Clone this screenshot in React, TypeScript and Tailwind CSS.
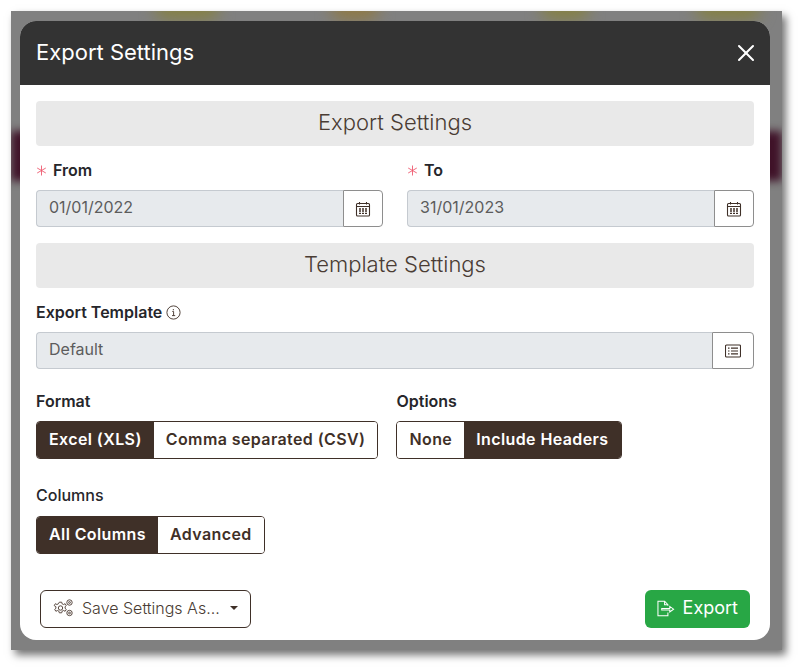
import { X } from "lucide-react";

const font = { fontFamily: "Inter, 'Liberation Sans', sans-serif" };

function CalendarIcon() {
  return (
    <svg width="16" height="16" viewBox="0 0 16 16" fill="none" stroke="#3f3028" strokeWidth="1.1">
      <rect x="1.5" y="2.5" width="13" height="12.5" rx="1" />
      <path d="M1.5 5.5h13M4.5 1v2.5M11.5 1v2.5" />
      <path d="M4 8h2M7 8h2M10 8h2M4 10h2M7 10h2M10 10h2M4 12.3h2M7 12.3h2M10 12.3h2" strokeWidth="1.3" />
    </svg>
  );
}

function ListIcon() {
  return (
    <svg width="16" height="14" viewBox="0 0 16 14" fill="none" stroke="#3f3028" strokeWidth="1.1">
      <rect x="0.5" y="1" width="15" height="12" rx="1" />
      <path d="M3 4.2h1.5M3 7h1.5M3 9.8h1.5M6 4.2h7M6 7h7M6 9.8h7" strokeWidth="1.2" />
    </svg>
  );
}

function InfoIcon() {
  return (
    <svg width="15" height="15" viewBox="0 0 15 15" fill="none" stroke="#3f3028" strokeWidth="0.9">
      <circle cx="7.5" cy="7.5" r="6.6" />
      <path d="M6.3 6.5h1.3v4M6 10.6h3.2" />
      <path d="M7.4 4.2v1" strokeWidth="1.2" />
    </svg>
  );
}

function Asterisk() {
  return (
    <svg width="11" height="11" viewBox="0 0 11 11" fill="none" stroke="#ee5a6f" strokeWidth="0.9">
      <path d="M5.5 0.5v10M1.2 3l8.6 5M1.2 8l8.6-5" />
    </svg>
  );
}

function GearsIcon() {
  return (
    <svg width="21" height="18" viewBox="0 0 21 18" fill="none" stroke="#5a4a42" strokeWidth="1">
      <circle cx="7.5" cy="9" r="2.2" />
      <path d="M6.3 3.2h2.4l.4 1.6 1.5.7 1.5-.8 1.2 1.9-1.2 1.1v1.6l1.2 1.1-1.2 1.9-1.5-.8-1.5.7-.4 1.6H6.3l-.4-1.6-1.5-.7-1.5.8-1.2-1.9 1.2-1.1V7.7L1.2 6.6l1.2-1.9 1.5.8 1.5-.7z" />
      <circle cx="16.5" cy="3.5" r="2.7" />
      <circle cx="16.5" cy="3.5" r="0.9" />
      <circle cx="16.5" cy="14" r="2.7" />
      <circle cx="16.5" cy="14" r="0.9" />
    </svg>
  );
}

function ExportIcon() {
  return (
    <svg width="18" height="17" viewBox="0 0 19 17" fill="none" stroke="white" strokeWidth="1.1">
      <path d="M11.5 5.5V4.5L8 0.8H1v15.4h10.5v-3.5" />
      <path d="M8 0.8v3.7h3.5" />
      <path d="M5 8.5h8.5V6.3l4 2.9-4 2.9V10H5z" />
    </svg>
  );
}

function SectionBand({ title }: { title: string }) {
  return (
    <div className="flex h-11.25 items-center justify-center rounded bg-[#e9e9e9] pb-0.5 text-[22px] font-light text-[#4a3c34]">
      {title}
    </div>
  );
}

function DateField({ label, value }: { label: string; value: string }) {
  return (
    <div className="flex flex-col gap-2">
      <label className="flex items-center gap-1.5 text-base font-semibold text-[#26262b]">
        <Asterisk />
        {label}
      </label>
      <div className="flex h-9.25 text-base">
        <div className="flex flex-1 items-center rounded-l border border-r-0 border-[#c5cad0] bg-[#e7eaed] px-3 pb-1 text-[#5c5c5c]">
          {value}
        </div>
        <div className="flex w-10 items-center justify-center rounded-r border border-[#8e8e8e] bg-white">
          <CalendarIcon />
        </div>
      </div>
    </div>
  );
}

function Segmented({ items, active }: { items: string[]; active: string }) {
  return (
    <div className="flex h-9.5 w-fit overflow-hidden rounded border border-[#3f3028] text-base font-semibold tracking-wide">
      {items.map((item) => (
        <div
          key={item}
          className={
            item === active
              ? "flex items-center bg-[#3f3028] px-3 pb-0.5 text-white"
              : "flex items-center bg-white px-3 pb-0.5 text-[#3f3028]"
          }
        >
          {item}
        </div>
      ))}
    </div>
  );
}

export default function App() {
  return (
    <div className="h-screen bg-white pl-[11px] pt-[11px]" style={font}>
      <div className="relative h-[639px] w-[771px] overflow-hidden bg-[#808080] pl-[9px] pt-2.5 shadow-[4px_5px_8px_rgba(0,0,0,0.55)]">
        {/* blurred page behind the modal */}
        <div className="absolute inset-x-0 top-30 h-12.5 bg-[#3f1228] blur-xs" />
        <div className="absolute -top-3 left-36 h-5 w-16 rounded-full bg-[#85803f] blur-sm" />
        <div className="absolute -top-3 left-80 h-5 w-12 rounded-full bg-[#8f7840] blur-sm" />
        <div className="absolute -top-3 left-[530px] h-5 w-12 rounded-full bg-[#85803f] blur-sm" />
        <div className="absolute -top-3 left-[685px] h-5 w-16 rounded-full bg-[#85803f] blur-sm" />

        <div className="relative flex h-[619px] w-[750px] flex-col overflow-hidden rounded-2xl bg-white">
          <div className="flex h-16 items-center justify-between bg-[#333333] pl-4 pr-2.5 text-white">
            <h1 className="mb-0.5 text-[22px] font-normal">Export Settings</h1>
            <X size={28} strokeWidth={1.75} />
          </div>

          <div className="flex flex-1 flex-col px-4 pb-3 pt-4">
            <SectionBand title="Export Settings" />

            <div className="mt-3 grid grid-cols-2 gap-6">
              <DateField label="From" value="01/01/2022" />
              <DateField label="To" value="31/01/2023" />
            </div>

            <div className="mt-4">
              <SectionBand title="Template Settings" />
            </div>

            <div className="mt-3 flex flex-col gap-2">
              <label className="flex items-center gap-1 text-base font-semibold text-[#26262b]">
                Export Template <InfoIcon />
              </label>
              <div className="flex h-9.25 text-base">
                <div className="flex flex-1 items-center rounded-l border border-r-0 border-[#c5cad0] bg-[#e7eaed] px-3 pb-1 text-[#5c5c5c]">
                  Default
                </div>
                <div className="flex w-10.5 items-center justify-center rounded-r border border-[#8e8e8e] bg-white">
                  <ListIcon />
                </div>
              </div>
            </div>

            <div className="mt-5 flex gap-4.5">
              <div className="flex flex-col gap-2">
                <span className="text-base font-semibold text-[#26262b]">Format</span>
                <Segmented items={["Excel (XLS)", "Comma separated (CSV)"]} active="Excel (XLS)" />
              </div>
              <div className="flex flex-col gap-2">
                <span className="text-base font-semibold text-[#26262b]">Options</span>
                <Segmented items={["None", "Include Headers"]} active="Include Headers" />
              </div>
            </div>

            <div className="mt-6 flex flex-col gap-2.25">
              <span className="text-base font-medium text-[#26262b]">Columns</span>
              <Segmented items={["All Columns", "Advanced"]} active="All Columns" />
            </div>

            <div className="mt-auto flex items-center justify-between px-1">
              <button className="flex h-9.5 items-center gap-2 rounded-md border border-[#3f3028] bg-white px-3 pb-0.5 text-base font-light text-[#4a3c34]">
                <GearsIcon />
                Save Settings As...
                <span className="ml-0.5 border-x-4 border-t-4 border-x-transparent border-t-[#3f3028]" />
              </button>
              <button className="flex h-9.5 items-center gap-2 rounded-md bg-[#28a745] px-3 pb-0.5 text-lg text-white">
                <ExportIcon />
                Export
              </button>
            </div>
          </div>
        </div>
      </div>
    </div>
  );
}
